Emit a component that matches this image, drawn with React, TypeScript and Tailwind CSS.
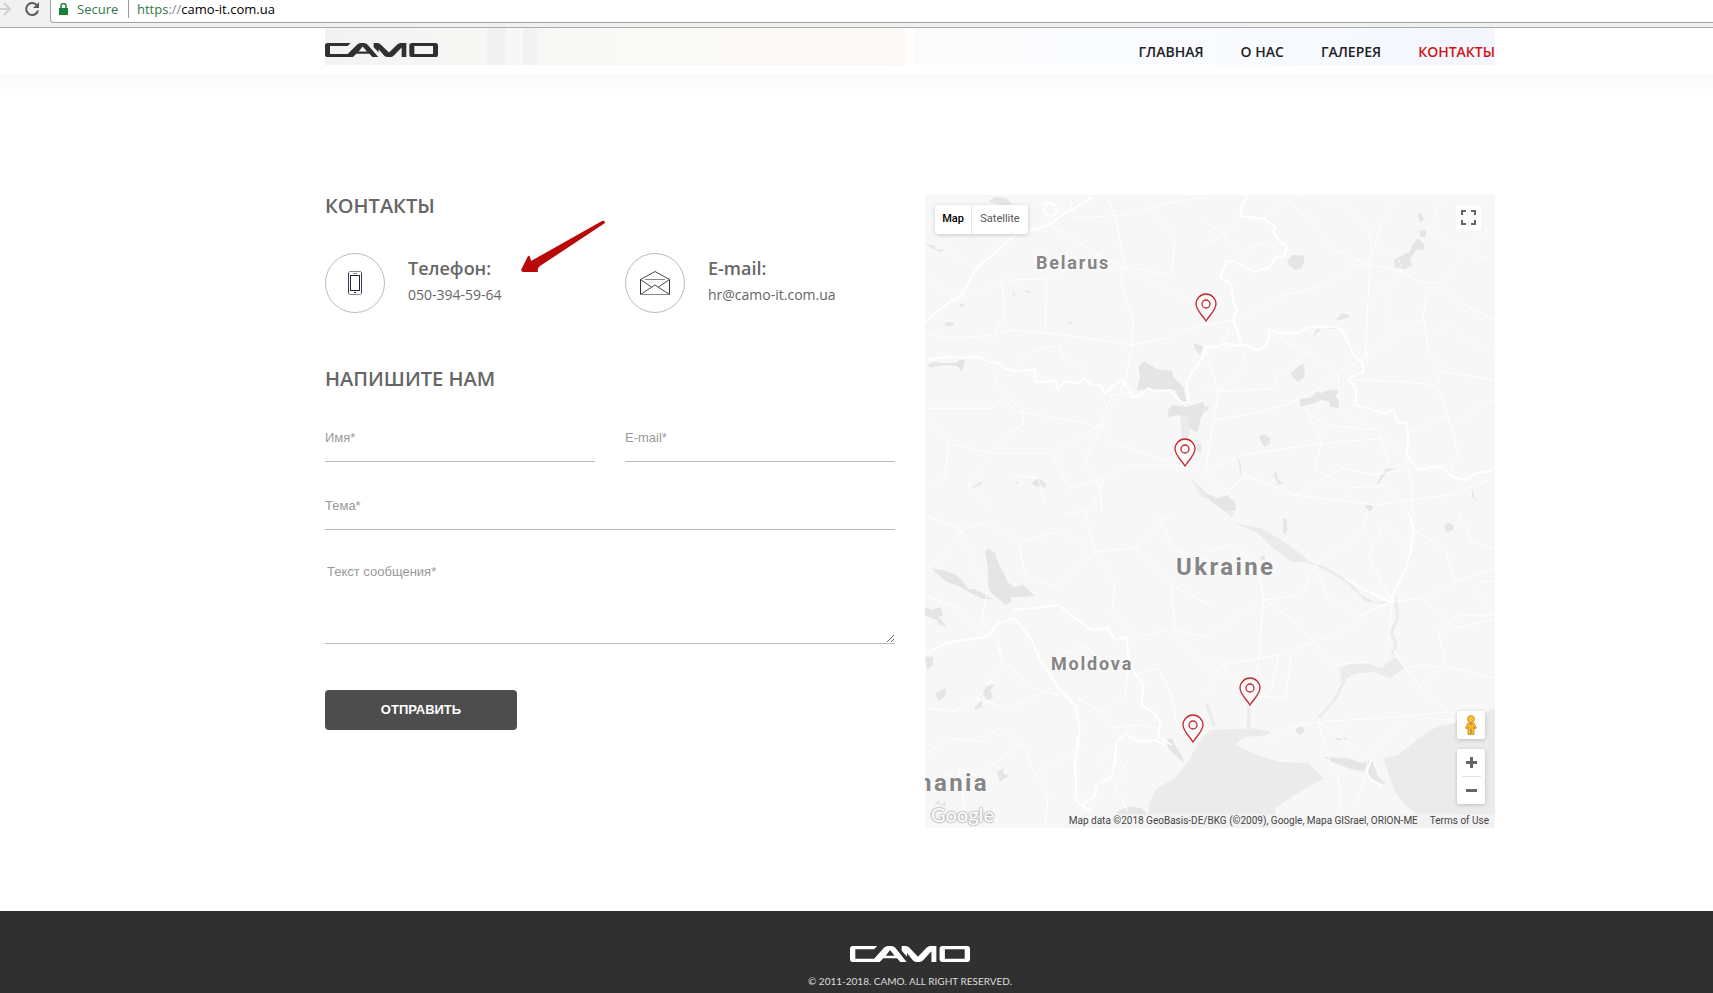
import React from "react";

interface NavItem {
  label: string;
  href: string;
  active?: boolean;
}

interface Pin {
  city: string;
  position: string;
}

interface MapLabel {
  name: string;
  className: string;
}

const navItems: NavItem[] = [
  { label: "ГЛАВНАЯ", href: "#home" },
  { label: "О НАС", href: "#about" },
  { label: "ГАЛЕРЕЯ", href: "#gallery" },
  { label: "КОНТАКТЫ", href: "#contacts", active: true },
];

const pins: Pin[] = [
  { city: "Гомель", position: "left-[270px] top-[98px]" },
  { city: "Киев", position: "left-[249px] top-[243px]" },
  { city: "Николаев", position: "left-[314px] top-[482px]" },
  { city: "Одесса", position: "left-[257px] top-[519px]" },
];

const mapLabels: MapLabel[] = [
  { name: "Belarus", className: "left-[111px] top-[54px] text-lg" },
  { name: "Ukraine", className: "left-[251px] top-[358px] text-2xl" },
  { name: "Moldova", className: "left-[126px] top-[455px] text-lg" },
  { name: "Romania", className: "left-[-48px] top-[574px] text-2xl" },
];

const CamoLogo: React.FC<{ className?: string }> = ({ className }) => (
  <svg
    viewBox="0 0 339 43"
    preserveAspectRatio="none"
    className={className}
    fill="currentColor"
    fillRule="evenodd"
    role="img"
    aria-label="CAMO"
  >
    <path d="M77 0 68 9H15V34H68L96 5Q101 0 107 0H117Q123 0 128 5L160 43H142L133 33H94L84 43H8Q0 43 0 35V8Q0 0 8 0ZM101 26H126L113 11Z" />
    <path d="M146 0H158Q163 0 168 5L192 29 216 5Q221 0 226 0H244V43H230V14L206 39Q202 43 197 43H187Q182 43 178 39L161 19V29L146 13Z" />
    <path d="M261 0H331Q339 0 339 8V35Q339 43 331 43H261Q253 43 253 35V8Q253 0 261 0ZM268 9V34H324V9Z" />
  </svg>
);

const PhoneIcon: React.FC = () => (
  <svg width="16" height="24" viewBox="0 0 16 24" fill="none">
    <rect x="1.5" y="0.5" width="13" height="23" rx="1.5" stroke="#8a8a8a" />
    <path d="M1.5 2V22M14.5 2V22" stroke="#3d3a4a" />
    <rect x="3.500" y="4.500" width="9" height="15" stroke="#25203a" />
    <path d="M6 2.500h4" stroke="#8a8a8a" />
    <path d="M7 21.500h2" stroke="#222" />
  </svg>
);

const EnvelopeIcon: React.FC = () => (
  <svg width="30" height="24" viewBox="0 0 30 24" fill="none" stroke="#333">
    <path d="M.5 8.500 15 .5 29.500 8.500M.5 8.500 11.500 16M29.500 8.500 18.500 16M.5 23.500 15 14 29.500 23.500" strokeWidth="0.900" />
    <path d="M.5 8.500V23.500M29.500 8.500V23.500" />
    <path d="M5 8.500H25M.5 23.500H29.500" stroke="#888" />
  </svg>
);

const AddressBar: React.FC = () => (
  <div className="flex h-7 items-start border-b border-[#a9a9a9] bg-[#f1f1f1]">
    <div className="flex h-[18px] w-[50px] shrink-0 items-center gap-3">
      <svg width="12" height="18" viewBox="0 0 12 18" fill="none" stroke="#d0d0d0" strokeWidth="2">
        <path d="M0 9H10M4 3l6 6-6 6" />
      </svg>
      <svg width="16" height="16" viewBox="0 0 16 16" fill="none" stroke="#5a5a5a" strokeWidth="2">
        <path d="M13 4.500A6 6 0 1 0 14 9.500" />
        <path d="M15 1V7H9Z" fill="#5a5a5a" stroke="none" />
      </svg>
    </div>
    <div className="flex h-[23px] grow items-start rounded-bl border-b border-l border-[#a3a3a3] bg-white pl-2 font-['Open_Sans',sans-serif] text-[13px] leading-[18px]">
      <svg width="9" height="12" viewBox="0 0 9 12" className="mt-[3px]">
        <path d="M0 5H9V12H0Z" fill="#188038" />
        <path d="M2 5V3a2.500 2.500 0 0 1 5 0V5" fill="none" stroke="#188038" strokeWidth="1.500" />
      </svg>
      <span className="ml-[9px] w-[52px] border-r border-[#9a9a9a] text-[#2f7a48]">Secure</span>
      <p className="ml-2 text-black">
        <span className="text-[#2f7a48]">https</span>
        <span className="text-[#888]">://</span>
        camo-it.com.ua
      </p>
    </div>
  </div>
);

const Header: React.FC = () => (
  <header className="pl-[107px]">
    <div className="relative mx-auto flex h-[47px] max-w-[1170px] items-start justify-between">
      <div className="absolute inset-x-0 top-0 flex h-[37px] gap-[10px]">
        <div className="flex grow basis-0 bg-linear-to-r from-[#f3f3f3] via-[#f9f9f6] to-[#fcf9f6]">
          <div className="ml-[28%] w-[19px] bg-[#f1f1f1]" />
          <div className="ml-[17px] w-[14px] bg-[#f2f2f2]" />
        </div>
        <div className="grow basis-0 bg-linear-to-r from-[#fbfbfb] via-[#f9fbff] to-[#f3f7fd]" />
      </div>
      <a href="#home" className="relative mt-[15px] text-[#303030]">
        <CamoLogo className="h-[14px] w-[113px]" />
      </a>
      <nav className="relative mt-[14px] flex gap-[37px] font-['Open_Sans',sans-serif] text-sm leading-5 font-semibold">
        {navItems.map((item) => (
          <a
            key={item.href}
            href={item.href}
            className={item.active ? "text-[#cc1719]" : "text-[#222]"}
          >
            {item.label}
          </a>
        ))}
      </nav>
    </div>
  </header>
);

const ContactItem: React.FC<{
  title: string;
  value: string;
  href: string;
  icon: React.ReactNode;
}> = ({ title, value, href, icon }) => (
  <div className="flex gap-[23px]">
    <div className="flex size-[60px] shrink-0 items-center justify-center rounded-full border border-[#bbb]">
      {icon}
    </div>
    <div>
      <h3 className="mt-[3px] text-lg leading-6 font-semibold">{title}</h3>
      <a href={href} className="mt-[5px] block text-sm leading-5">
        {value}
      </a>
    </div>
  </div>
);

const fieldClass =
  "block w-full border-b border-[#bbb] bg-transparent font-['Liberation_Sans',Arial,sans-serif] text-[13px] text-[#444] outline-none placeholder:text-[#999]";

const ContactForm: React.FC = () => (
  <form
    className="mt-6 grid grid-cols-2 gap-x-[30px]"
    onSubmit={(e) => e.preventDefault()}
  >
    <input type="text" aria-label="Имя" placeholder="Имя*" className={`${fieldClass} h-12`} />
    <input type="email" aria-label="E-mail" placeholder="E-mail*" className={`${fieldClass} h-12`} />
    <input
      type="text"
      aria-label="Тема"
      placeholder="Тема*"
      className={`${fieldClass} col-span-2 mt-5 h-12`}
    />
    <textarea
      aria-label="Текст сообщения"
      placeholder="Текст сообщения*"
      className={`${fieldClass} col-span-2 mt-[33px] h-[81px] resize-y px-[2px] py-px leading-4`}
    />
    <div className="col-span-2 mt-[46px]">
      <button
        type="submit"
        className="h-10 w-48 rounded bg-[#4d4d4d] font-['Liberation_Sans',Arial,sans-serif] text-[13px] font-bold text-white"
      >
        ОТПРАВИТЬ
      </button>
    </div>
  </form>
);

// Terrain is drawn at three units per pixel, in four quadrants.
const MapTerrain: React.FC = () => (
  <svg
    viewBox="0 0 1710 1899"
    preserveAspectRatio="xMinYMin slice"
    className="absolute inset-0 size-full"
    fill="none"
    strokeLinejoin="round"
    aria-hidden="true"
  >
    {/* sea */}
    <g fill="#ebebeb">
      <path d="M855 1605 820 1643 790 1700 750 1748 690 1785 670 1830 672 1860 700 1899H1710V1540L1670 1558 1640 1548 1590 1585 1540 1592 1480 1630 1420 1680 1375 1690 1385 1720 1410 1790 1440 1830 1480 1860H1330L1070 1858 1050 1840 1110 1800 1200 1755 1150 1705 1060 1700 1000 1680 930 1650 960 1625 1020 1622 1040 1610 980 1600Z" />
      <path d="M920 980 960 990 1010 1000 1070 1035 1120 1070 1160 1103 1200 1115 1270 1155 1310 1200 1350 1222 1400 1220 1370 1227 1320 1218 1260 1160 1200 1125 1150 1103 1100 1100 1050 1065 1000 1015Z" />
      <path d="M1245 1420 1280 1405 1330 1407 1370 1420 1410 1385 1440 1418 1395 1450 1345 1430 1290 1437 1265 1450 1240 1505 1190 1565 1172 1573 1220 1520 1250 1465Z" />
      <path d="M765 640 800 635 790 740 770 730ZM793 845 850 900 900 920 930 960 920 965 870 920 830 905Z" />
    </g>
    {/* Crimea */}
    <path
      d="M1050 1840 1110 1800 1160 1770 1200 1750 1330 1690 1385 1740 1410 1790 1440 1830 1425 1865 1400 1899H1060Z"
      fill="#f7f7f7"
    />
    <path
      d="M1412 1208 1418 1270 1400 1310 1412 1350 1400 1380M972 1530 970 1610M845 1525 868 1595M1080 970V1020"
      stroke="#ececec"
      strokeWidth="10"
    />
    {/* forests and lakes */}
    <g fill="#e5e5e5">
      <g transform="translate(-15 -15)">
        <path d="M655 530 672 513 712 538 755 542 760 560 790 590 802 645 780 630 765 600 710 598 650 600 660 560Z" />
        <path d="M742 665 755 645 800 650 850 635 855 660 840 690 832 730 810 715 805 680 775 675 745 682Z" />
        <path d="M820 460 850 470 840 495 828 480ZM830 760 846 765 842 788 832 783Z" />
        <path d="M205 35 225 20 260 25 275 42 250 45ZM15 160 45 168 48 178 75 180 60 186 35 175ZM115 340 135 345 125 352ZM135 315 155 314 155 320ZM280 303 288 315 280 317ZM308 300 332 303 330 312ZM440 398 458 395 455 403ZM65 400 80 412 75 395 105 400 90 410 80 405Z" />
        <path d="M22 525 45 515 70 520 110 518 120 507 136 512 125 545 112 528 75 525 28 533ZM145 898 192 870 180 885 155 895ZM333 880 355 865 380 882 375 892 345 888ZM275 872 285 880 298 872 290 883Z" />
      </g>
      <g transform="translate(840 -15)">
        <path d="M247 212 262 194 296 197 298 212 290 235 272 240 250 224ZM567 208 585 200 600 190 612 188 622 165 638 145 655 160 660 178 635 180 615 205 622 228 600 237 570 232ZM640 70 648 70 658 90 643 95ZM643 122 665 120 662 140 645 142Z" />
        <path d="M392 388 412 370 432 375 430 384 400 390ZM360 415 390 408 392 416ZM340 415 347 420 332 432 323 447 330 425ZM258 550 282 527 296 522 300 545 295 565 278 576 262 560Z" />
        <path d="M285 625 315 625 335 605 345 610 365 602 388 598 405 605 390 615 403 635 402 655 372 650 375 635 350 630 320 642 287 650ZM162 738 180 733 196 745 195 762 178 770 168 755ZM0 648 12 650 10 660 0 665Z" />
        <path d="M510 888 530 855 545 835 570 837 545 845 525 875ZM176 852 205 862 212 840 220 870 235 880 220 885 210 862ZM480 950 492 940 505 953 495 965ZM0 910 40 925 65 915 90 935 93 962H55L20 935ZM90 785 108 825 107 865 102 820ZM800 890 807 920 825 940 802 920Z" />
      </g>
      <g transform="translate(-15 945)">
        <path d="M195 125 205 115 225 130 235 160 250 185 262 215 280 230 310 225 330 245 345 258 310 260 270 262 275 275 255 285 240 270 220 255 205 235 203 170Z" />
        <path d="M35 175 70 180 110 195 130 215 145 238 165 238 200 255 220 268 190 267 150 248 120 230 80 215 55 195ZM15 290 35 300 60 290 70 315 55 320 80 350 60 345 50 330 15 315ZM15 440 38 440 40 462 22 480ZM45 550 65 540 80 535 75 560 55 572ZM190 530 225 523 212 540 218 565 200 570 190 555ZM165 590 185 572 187 590 165 600Z" />
        <path d="M230 785 250 775 250 790 268 797 240 815ZM738 690 755 685 765 705 785 735 792 760 770 740 745 715ZM590 905 625 890 665 895 690 920 650 915 600 920ZM45 880 55 870 65 885 80 870 75 890Z" />
      </g>
      <g transform="translate(840 945)">
        <path d="M717 48 730 38 745 45 745 60 725 66ZM272 658 288 645 300 660 288 676 275 668ZM390 683 425 683 425 690 395 690ZM235 25 245 30 247 60 235 70ZM165 140 178 135 180 148 168 152ZM355 740 400 745 430 745 470 760 500 750 520 800 545 825 520 820 480 785 430 775 380 755Z" />
      </g>
    </g>
    {/* country borders */}
    <g stroke="#fff" strokeWidth="6">
      <path d="M0 495 60 485 110 488 160 485 190 500 215 503 240 520 270 528 300 527 330 523 332 560 370 560 390 558 400 587 415 560 460 565 475 548 500 570 530 572 540 598 560 575 590 555 615 588 620 605 640 605 670 580 690 590 735 585 757 610 775 625 790 622 785 565 810 520 835 485 840 455 880 455 900 445 930 452 960 450 980 460 1000 465 1020 455 1032 435 1033 405 1070 415 1115 415 1150 395 1190 395 1230 395 1250 405 1270 440 1285 480 1310 500 1315 530 1270 550 1295 585 1290 630 1330 640 1380 655 1405 645 1415 680 1445 685 1450 730 1445 780 1480 825 1520 815 1550 815 1580 845 1620 855 1650 835 1690 830 1710 820" />
      <path d="M970 0 948 35 947 65 1015 70 1050 95 1045 110 1065 140 1085 155 1080 180 1050 190 1030 220 985 230 960 215 930 200 905 200 885 245 920 270 925 320 935 350 925 375 945 430 953 450" />
      <path d="M0 380 60 330 110 300 150 225 225 160 270 120 370 90 395 72 430 50 500 8M340 30Q400 10 395 50M358 45C360 20 395 20 395 45S355 65 358 45M440 20 430 50 410 60" />
      <path d="M0 1378 60 1345 120 1335 185 1325 220 1285 270 1270 320 1335 345 1395 380 1445 400 1480 450 1530 465 1600 450 1700 455 1820 500 1850M265 1245 320 1240 400 1230 450 1270 500 1305 550 1300 570 1335 605 1325 610 1400 640 1450 655 1470 650 1530 690 1555 705 1580 700 1625 740 1650" />
      <path d="M470 1830 510 1800 515 1770 560 1745 570 1700 575 1640 600 1615 640 1640 690 1635 720 1650" />
      <path d="M1450 950 1465 1000 1460 1060 1440 1130 1400 1205 1405 1225 1310 1180 1260 1150M1340 1690 1325 1730 1335 1755 1370 1770" />
    </g>
    <g stroke="#fff" strokeWidth="5" strokeDasharray="5 9">
      <path d="M1180 5 1235 30 1290 45 1330 100 1340 155 1390 165 1425 200 1430 240 1370 280 1400 330 1385 390 1420 400 1480 375M1550 0 1525 80 1530 120 1590 150 1650 185 1710 190M1390 400 1370 440 1305 490M1480 400 1520 410 1580 390 1620 430 1710 475M1450 705 1500 705 1530 665 1620 670 1680 620 1710 618" />
    </g>
    {/* roads */}
    <g stroke="#fff" strokeWidth="3">
      <path d="M0 90 60 150 120 200 155 230M0 230 90 320 160 290 260 255 370 250 520 180 600 220 700 270 780 310 830 350 855 385M350 80 430 120 520 180 590 215 590 280 625 370 620 450 600 560 530 690 480 800 520 860 530 945M540 0 570 60 600 220M0 60 60 120 150 60 250 40 280 120M440 70 600 60 720 25 855 5M660 20 750 130 740 240 600 215M15 420 100 430 200 420 260 405 420 420 620 450 720 430 855 380M280 500 320 470 400 450 420 500 480 520M210 540 240 620 280 650 370 665 460 680 520 695 560 600 630 590M0 640 70 640 200 640 240 600 290 640 295 690 240 720 200 775 70 745 20 680M70 745 60 850 0 870M200 775 380 775 530 690 560 740 700 790 780 820 810 830M380 775 430 880 540 850 620 810 780 815M540 850 500 940 420 960M230 250 240 350 200 440M365 250 360 410M200 775 130 870 200 930M260 840 340 850 360 920" />
      <path d="M840 80 900 120 950 170 1020 140 1070 170M840 150 900 120 950 60 1000 80 1090 20 1170 90 1220 160 1320 205 1430 230 1480 260 1550 265 1620 170 1710 80M1090 20 1130 0M1290 190 1320 205 1290 215 1280 195M1420 0 1370 80 1335 200 1320 490M1320 205 1200 270 1080 300 1020 330 930 375 840 390M930 375 880 460 950 450 960 500 920 560 880 590 840 570M1550 265 1500 310 1495 370 1310 495 1240 535 1150 600 1080 630 960 660 870 675M1550 265 1600 320 1710 375M1495 370 1510 460 1550 520 1535 570 1580 700 1600 780 1570 840M1280 555 1430 560 1535 570M1550 530 1710 555M840 450 880 590 840 830M880 590 1050 580 1060 540 1150 475 1060 430 1090 410M1150 475 1240 535 1245 650 1360 710 1390 800 1350 840M1140 640 1200 690 1360 705M1140 640 1190 740 1170 820 1260 880M840 830 950 780 1190 745 1380 730 1440 790 1460 860 1460 950M840 840 900 900 960 840 1110 900 1250 820 1350 840 1460 820M1110 900 1350 930 1570 900 1710 850M1260 880 1380 870 1460 940" />
      <path d="M0 960 110 1005 180 980 280 1040 400 1010 510 1070 630 1060 740 950M110 1005 60 1080 0 1120M110 1005 150 1120 190 1180 170 1270 200 1330 240 1400 320 1480 400 1500M280 1040 300 1140 400 1180 510 1070 570 1160 560 1260 630 1330 740 1300 855 1330M510 1070 480 950M630 1060 740 1170 750 1320 855 1420M740 1170 855 1230M0 1200 100 1240 180 1320M0 1540 90 1550 150 1510 250 1540 380 1480M0 1680 70 1630 170 1640 220 1600 290 1640 330 1740 370 1800 360 1899M150 1520 230 1410 220 1330M330 1740 430 1680 470 1650M460 1510 530 1550 600 1500 610 1430M530 1550 560 1600 640 1590 700 1600M620 1440 700 1420 740 1500 760 1610M0 1780 100 1720 150 1740 220 1700 290 1640M100 1720 120 1840 60 1899M520 1700 560 1650 600 1720 570 1780 610 1850M700 950 740 1060 855 1100M400 1380 480 1350 540 1410 610 1390" />
      <path d="M840 1070 920 1050 1000 1110 1015 1215 1000 1400 980 1530M1015 1215 900 1290 840 1330M1015 1215 1100 1270 1165 1340 1230 1410 1330 1400M1165 1340 1280 1300 1320 1250 1400 1220 1490 1210 1590 1300 1710 1270M1165 1340 1060 1380 890 1410 840 1500M890 1410 960 1500 1080 1510 1100 1370M1015 1215 1130 1200 1170 1110 1300 1020 1330 950M1170 1110 1210 1210 1310 1260 1400 1220M1400 1220 1390 1340 1440 1420 1490 1410 1590 1420 1710 1450M1440 1420 1490 1480 1570 1550 1440 1565 1180 1580 1090 1600 1030 1640M1440 1565 1330 1690 1310 1780 1280 1850M1180 1580 1210 1690 1240 1750 1250 1850M1180 1580 1280 1650 1330 1690M1480 1480 1560 1400 1540 1310 1600 1260 1710 1260M1460 1000 1560 1060 1590 1160 1490 1210M1460 1060 1380 980 1330 1080 1400 1220M1600 950 1640 1040 1710 1060M1590 1160 1710 1120M1700 1265 1650 1190 1670 1160 1710 1160M890 1410 840 1390M1060 1380 1040 1480 980 1530M1500 1570 1590 1575" />
    </g>
  </svg>
);

const ContactMap: React.FC = () => (
  <section
    aria-label="Map"
    className="relative h-[633px] overflow-hidden bg-[#f7f7f7] font-[Roboto,sans-serif]"
  >
    <MapTerrain />
    {mapLabels.map((label) => (
      <span
        key={label.name}
        className={`absolute leading-7 font-bold tracking-widest text-[#858585] [text-shadow:0_0_3px_#fff,0_0_3px_#fff] ${label.className}`}
      >
        {label.name}
      </span>
    ))}
    {pins.map((pin) => (
      <button key={pin.city} type="button" aria-label={pin.city} className={`absolute ${pin.position}`}>
        <svg width="22" height="29" viewBox="0 0 22 29" fill="none" stroke="#c4282d" strokeWidth="1.300">
          <path d="M11 28C8 23 1 17 1 11a10 10 0 0 1 20 0C21 17 14 23 11 28Z" fill="#fafafa" />
          <circle cx="11" cy="11" r="4" />
        </svg>
      </button>
    ))}
    <div className="absolute top-[10px] left-[10px] flex h-[29px] rounded-xs bg-white text-[11px] shadow-[0_1px_4px_rgba(0,0,0,0.2)]">
      <button type="button" className="w-[37px] border-r border-[#e8e8e8] font-medium text-black">
        Map
      </button>
      <button type="button" className="w-14 text-[#565656]">
        Satellite
      </button>
    </div>
    <button
      type="button"
      aria-label="Fullscreen"
      className="absolute top-[10px] right-[14px] flex size-[25px] items-center justify-center bg-white"
    >
      <svg width="15" height="15" viewBox="0 0 15 15" fill="none" stroke="#666" strokeWidth="2">
        <path d="M1 5V1H5M10 1H14V5M14 10V14H10M5 14H1V10" />
      </svg>
    </button>
    <div className="absolute right-[10px] bottom-6 flex flex-col gap-[10px]">
      <button
        type="button"
        aria-label="Street View"
        className="flex size-7 items-center justify-center rounded-xs bg-white shadow-[0_1px_4px_rgba(0,0,0,0.2)]"
      >
        <svg width="12" height="20" viewBox="0 0 12 20">
          <path
            d="M3 8H9L11.500 13 10 14 9 12V19.500H6.500V14H5.500V19.500H3V12L2 14 .5 13Z"
            fill="#fbb829"
            stroke="#b98a3a"
            strokeWidth="0.800"
          />
          <circle cx="6" cy="4" r="3.500" fill="#fbc02d" stroke="#c08a30" strokeWidth="0.800" />
          <path d="M4 8H8L6 10Z" fill="#e8711c" />
        </svg>
      </button>
      <div className="flex flex-col items-center rounded-xs bg-white shadow-[0_1px_4px_rgba(0,0,0,0.2)]">
        <button type="button" aria-label="Zoom in" className="flex h-[27px] w-7 items-center justify-center">
          <svg width="11" height="11" viewBox="0 0 11 11" stroke="#666" strokeWidth="3">
            <path d="M0 5.500H11M5.500 0V11" />
          </svg>
        </button>
        <span className="h-px w-[19px] bg-[#e0e0e0]" />
        <button type="button" aria-label="Zoom out" className="flex h-[27px] w-7 items-center justify-center">
          <svg width="11" height="3" viewBox="0 0 11 3" fill="#666">
            <path d="M0 0H11V3H0Z" />
          </svg>
        </button>
      </div>
    </div>
    <a
      href="#google"
      className="absolute bottom-0 left-[6px] font-[Lato,sans-serif] text-xl leading-7 font-medium text-white [text-shadow:0_0_2px_#999,0_0_2px_#999]"
    >
      Google
    </a>
    <div className="absolute right-0 bottom-0 flex h-[14px] gap-3 bg-[#f5f5f5]/70 px-[6px] text-[10px] leading-[14px] text-[#444]">
      <span>Map data ©2018 GeoBasis-DE/BKG (©2009), Google, Mapa GISrael, ORION-ME</span>
      <a href="#terms">Terms of Use</a>
    </div>
  </section>
);

const Footer: React.FC = () => (
  <footer className="flex grow flex-col items-center bg-[#303030] pt-[35px] pl-[107px] text-white">
    <CamoLogo className="h-4 w-[120px]" />
    <p className="mt-[11px] font-[Lato,sans-serif] text-[10px] leading-4 text-[#ddd]">
      © 2011-2018. CAMO. ALL RIGHT RESERVED.
    </p>
  </footer>
);

const App: React.FC = () => {
  return (
    <div className="flex min-h-screen flex-col overflow-x-hidden bg-white">
      <AddressBar />
      <Header />
      <div className="h-5 bg-linear-to-b from-[#fafafa] to-white" />
      <main className="pb-[83px] pl-[107px]">
        <div className="mx-auto grid max-w-[1170px] grid-cols-2 gap-[30px] pt-[100px]">
          <div className="font-['Open_Sans',sans-serif] text-[#666]">
            <h2 className="text-xl leading-[22px] font-semibold">КОНТАКТЫ</h2>
            <div className="relative mt-9 grid grid-cols-2">
              <ContactItem
                title="Телефон:"
                value="050-394-59-64"
                href="tel:0503945964"
                icon={<PhoneIcon />}
              />
              <div className="pl-[15px]">
                <ContactItem
                  title="E-mail:"
                  value="hr@camo-it.com.ua"
                  href="mailto:hr@camo-it.com.ua"
                  icon={<EnvelopeIcon />}
                />
              </div>
              <svg
                width="86"
                height="54"
                viewBox="0 0 86 54"
                className="absolute top-[-34px] left-[195px]"
                fill="#b80808"
              >
                <path d="M82 2Q85 1 85 4L20 47Q17 49 18 53L3 53Q0 52 2 49L8 37Q10 36 11 42Z" />
              </svg>
            </div>
            <h2 className="mt-[55px] text-xl leading-[22px] font-semibold">НАПИШИТЕ НАМ</h2>
            <ContactForm />
          </div>
          <ContactMap />
        </div>
      </main>
      <Footer />
    </div>
  );
};

export default App;
